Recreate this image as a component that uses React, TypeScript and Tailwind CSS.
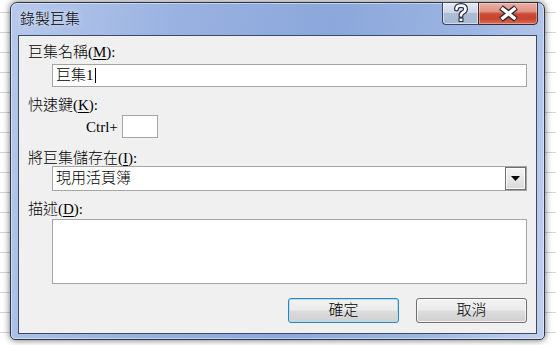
function L({ children }: { children: React.ReactNode }) {
  return <span className="font-normal">{children}</span>;
}

function Label({ zh, k }: { zh: string; k: string }) {
  return (
    <>
      {zh}
      <L>
        (<span className="underline underline-offset-2">{k}</span>):
      </L>
    </>
  );
}

export default function App() {
  const btnFace =
    "bg-[linear-gradient(to_bottom,#f2f2f2_0%,#ebebeb_48%,#dddddd_52%,#cfcfcf_100%)]";
  return (
    <div className="w-[556px] h-[345px] overflow-hidden bg-white bg-[repeating-linear-gradient(to_bottom,transparent_0px,transparent_12px,#d4d6d8_12px,#d4d6d8_13px,transparent_13px,transparent_20px)] pl-[10px] pt-[2px] font-['Liberation_Serif','Noto_Sans_CJK_TC',serif] font-light text-[15px] text-black">
      <div className="w-[535px] h-[338px] rounded-t-[7px] rounded-b-[5px] border border-[#2c374c] bg-[linear-gradient(100deg,#b6c9eb_0%,#9ab2e1_28%,#8ba7db_55%,#9cb4e2_78%,#c0d0ee_100%)] shadow-[inset_0_0_0_1px_rgba(255,255,255,0.45),0_0_7px_rgba(0,0,0,0.6)] flex flex-col">
        {/* title bar */}
        <div className="h-[32px] flex items-start shrink-0">
          <div className="pl-[9px] h-[31px] flex items-center text-[15px] font-['Noto_Sans_CJK_TC',sans-serif] font-light text-black [text-shadow:0_0_6px_rgba(255,255,255,0.9)]">
            錄製巨集
          </div>
          <div className="ml-auto mr-[6px] mt-[-1px] flex h-[23px]">
            <div className="w-[36px] h-[23px] border border-[#3a4560] border-r-0 rounded-bl-[4px] bg-[linear-gradient(to_bottom,#e4eaf4_0%,#cdd7e8_45%,#adbdd6_50%,#a7b8d2_100%)] shadow-[inset_0_0_0_1px_rgba(255,255,255,0.5)] flex items-center justify-center">
              <svg width="16" height="21" viewBox="0 0 16 21">
                <path d="M3.5 6 Q3.5 2.5 8 2.5 Q12.5 2.5 12.5 6 Q12.5 8.3 9.5 9.8 Q8 10.6 8 12.5" fill="none" stroke="#2b3346" strokeWidth="5" strokeLinecap="round" />
                <rect x="5.5" y="14.5" width="5" height="4.5" fill="#2b3346" />
                <path d="M3.5 6 Q3.5 2.5 8 2.5 Q12.5 2.5 12.5 6 Q12.5 8.3 9.5 9.8 Q8 10.6 8 12.5" fill="none" stroke="#ffffff" strokeWidth="2.6" strokeLinecap="round" />
                <rect x="6.6" y="15.6" width="2.8" height="2.4" fill="#ffffff" />
              </svg>
            </div>
            <div className="w-[60px] h-[23px] border border-[#3a2a30] rounded-br-[4px] bg-[linear-gradient(to_bottom,#eab0a5_0%,#e29283_40%,#cc4a34_52%,#c8432e_75%,#d86f5a_100%)] shadow-[inset_0_0_0_1px_rgba(255,255,255,0.35)] flex items-center justify-center">
              <svg width="21" height="17" viewBox="0 0 21 17">
                <path d="M3 2.5 L18 14.5 M18 2.5 L3 14.5" stroke="#2c2a33" strokeWidth="6" strokeLinecap="butt" />
                <path d="M3.6 3 L17.4 14 M17.4 3 L3.6 14" stroke="#ffffff" strokeWidth="3.4" strokeLinecap="butt" />
              </svg>
            </div>
          </div>
        </div>
        {/* client area */}
        <div className="mx-[7px] h-[299px] border border-[#3d4a63] bg-[#f0f0f0] flex flex-col">
          <div className="pl-[9px] mt-[7px] h-[18px] leading-[18px]">
            <Label zh="巨集名稱" k="M" />
          </div>
          <div className="ml-[33px] mt-[3px] w-[475px] h-[23px] border border-[#a5a5a5] bg-white flex items-center pl-[3px]">
            <span>
              巨集<L>1</L>
            </span>
            <span className="w-px h-[15px] bg-black ml-[1px]" />
          </div>
          <div className="pl-[9px] mt-[9px] h-[18px] leading-[18px]">
            <Label zh="快速鍵" k="K" />
          </div>
          <div className="mt-[1px] h-[23px] flex items-center">
            <span className="ml-[67px] w-[36px] leading-[18px] font-normal">Ctrl+</span>
            <div className="w-[36px] h-[23px] border border-[#a5a5a5] bg-white" />
          </div>
          <div className="pl-[9px] mt-[12px] h-[16px] leading-[16px]">
            <Label zh="將巨集儲存在" k="I" />
          </div>
          <div className="ml-[33px] w-[475px] h-[25px] border border-[#a5a5a5] bg-white flex items-center">
            <span className="pl-[3px] flex-1">現用活頁簿</span>
            <div className="w-[21px] h-[23px] border border-[#6f6f6f] bg-[linear-gradient(to_bottom,#f3f3f3_0%,#e8e8e8_50%,#d9d9d9_100%)] shadow-[inset_0_0_0_1px_rgba(255,255,255,0.8)] flex items-center justify-center">
              <svg width="9" height="5" viewBox="0 0 9 5">
                <path d="M0 0 L9 0 L4.5 5 Z" fill="#000" />
              </svg>
            </div>
          </div>
          <div className="pl-[9px] mt-[9px] h-[18px] leading-[18px]">
            <Label zh="描述" k="D" />
          </div>
          <div className="ml-[33px] mt-[1px] w-[475px] h-[65px] border border-[#a5a5a5] bg-white" />
          <div className="mt-[14px] flex justify-end pr-[9px] gap-[17px]">
            <div className={`w-[111px] h-[25px] rounded-[3px] border border-[#3c7fb1] ${btnFace} shadow-[inset_0_0_0_1px_#a9e3fb] flex items-center justify-center`}>
              確定
            </div>
            <div className={`w-[111px] h-[25px] rounded-[3px] border border-[#707070] ${btnFace} shadow-[inset_0_0_0_1px_rgba(255,255,255,0.7)] flex items-center justify-center`}>
              取消
            </div>
          </div>
        </div>
      </div>
    </div>
  );
}
